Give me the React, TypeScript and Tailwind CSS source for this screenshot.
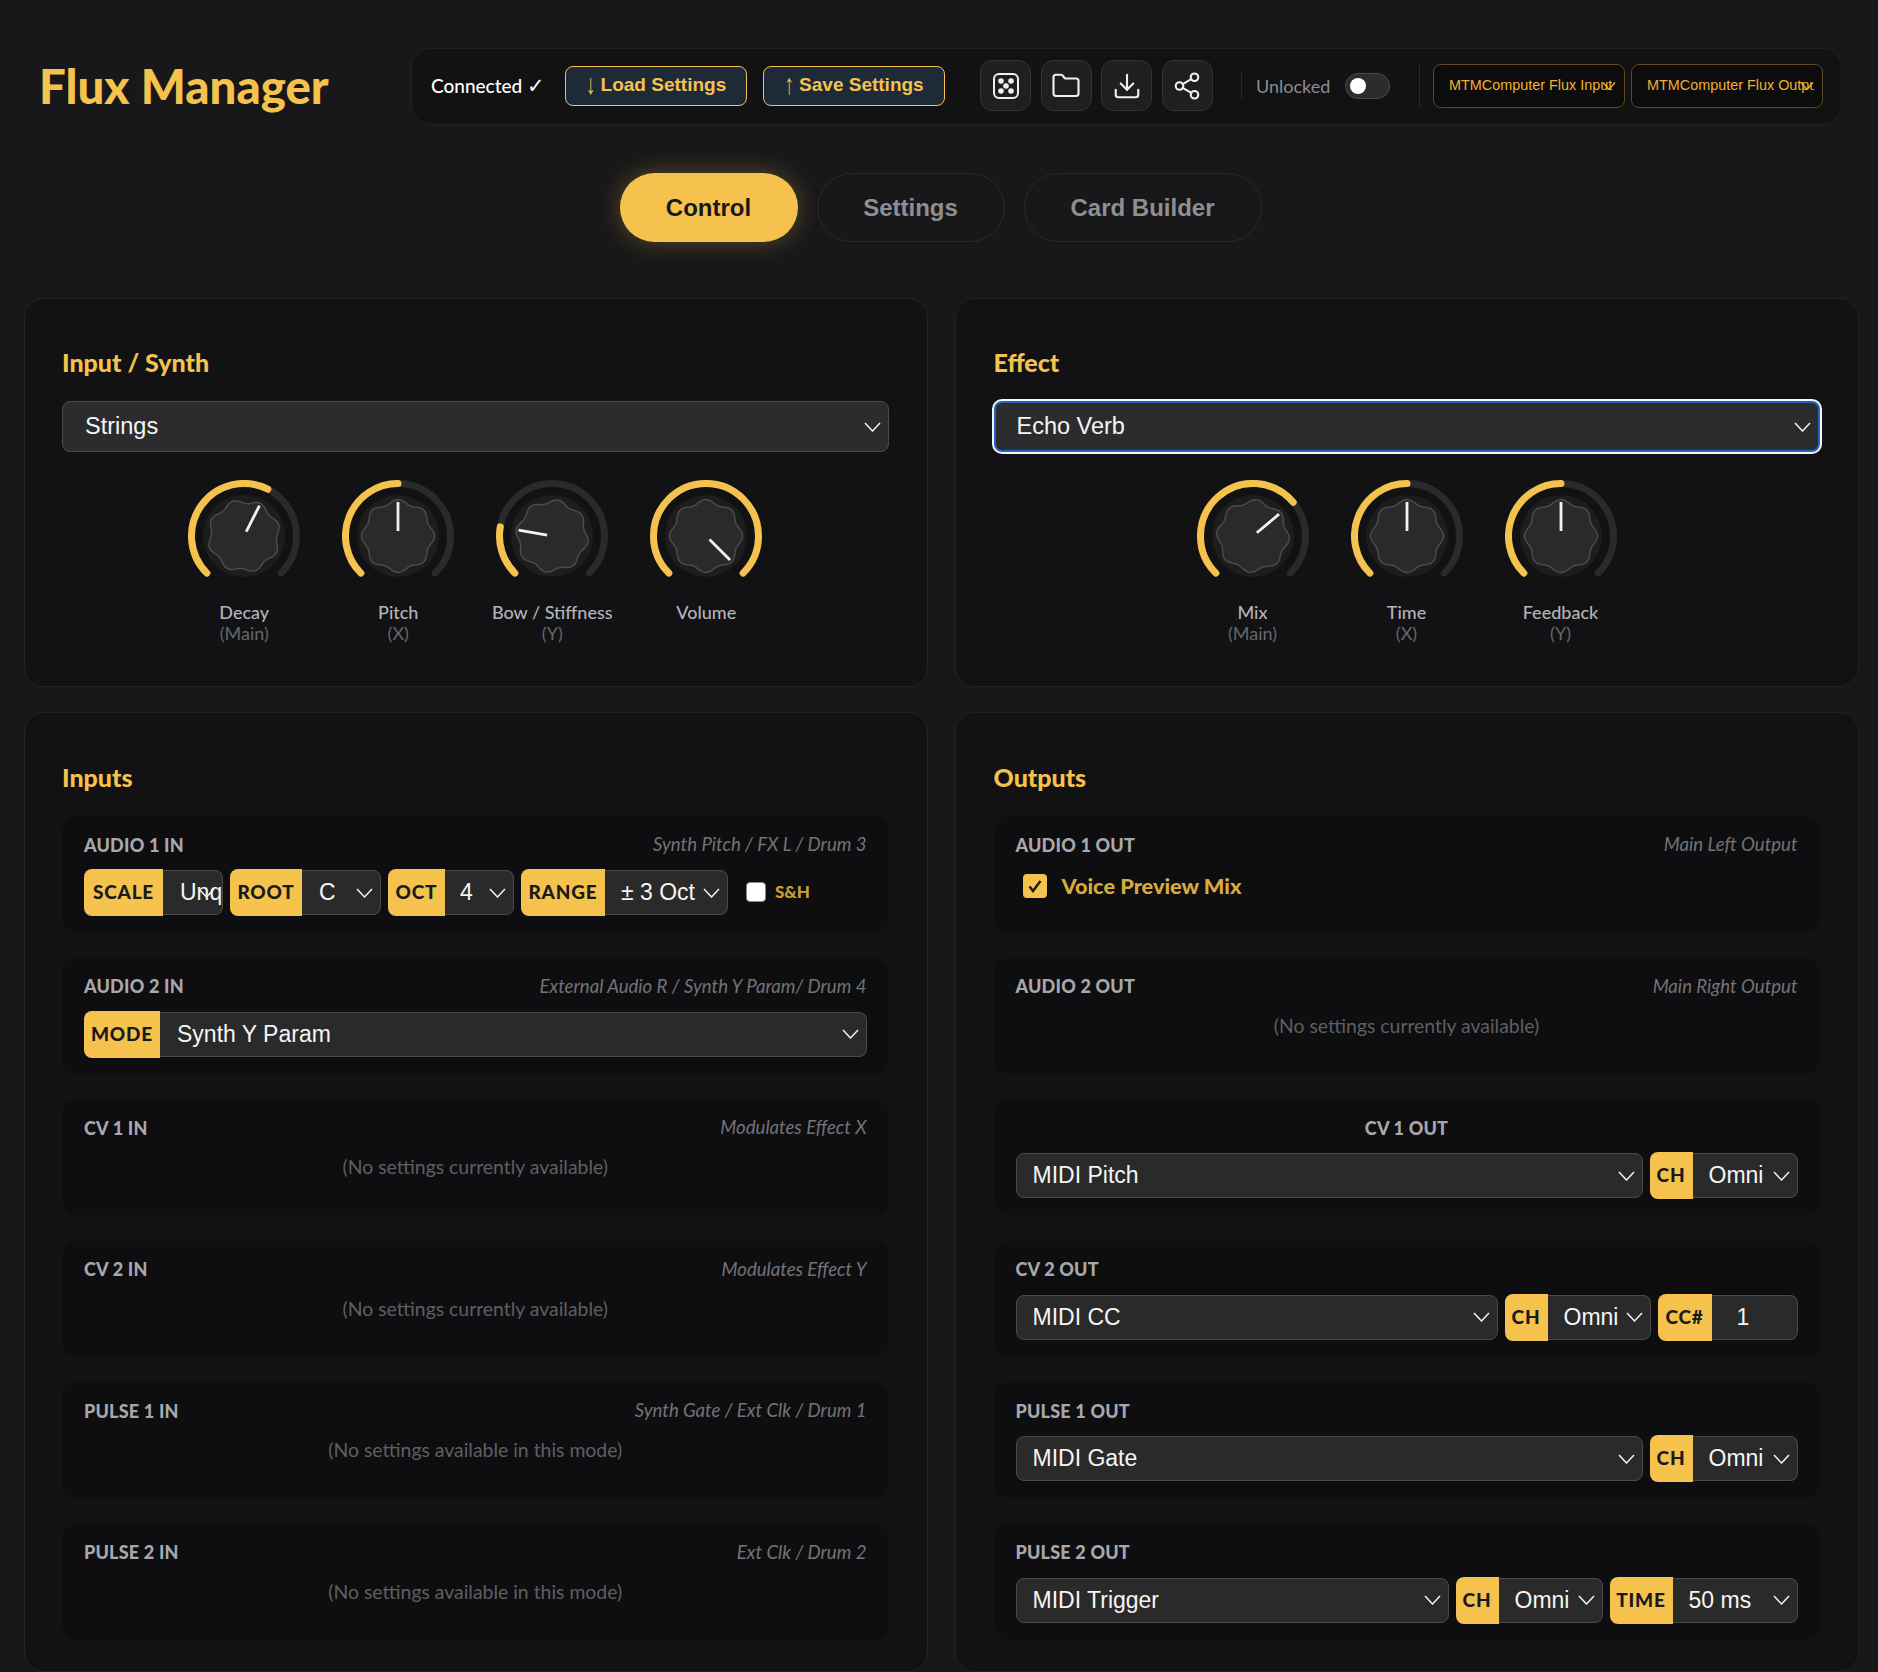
import { Download, Folder, Share2 } from 'lucide-react'

const sans = "[font-family:'Liberation_Sans',Arial,sans-serif]"

function polar(r: number, deg: number) {
  const a = ((deg - 90) * Math.PI) / 180
  return [56 + r * Math.cos(a), 56 + r * Math.sin(a)]
}

function arc(from: number, to: number) {
  const [x1, y1] = polar(52.5, from)
  const [x2, y2] = polar(52.5, to)
  return `M${x1} ${y1}A52.5 52.5 0 ${to - from > 180 ? 1 : 0} 1 ${x2} ${y2}`
}

// scalloped cap of the knob, eight lobes
const wavy = Array.from({ length: 121 }, (_, i) => {
  const deg = i * 3
  const [x, y] = polar(34.5 + 2 * Math.cos((8 * deg * Math.PI) / 180), deg)
  return `${i ? 'L' : 'M'}${x.toFixed(2)} ${y.toFixed(2)}`
}).join('') + 'Z'

function Knob({ angle, label, sub }: { angle: number; label: string; sub?: string }) {
  return (
    <div className="flex w-[130px] flex-col items-center">
      <svg width="112" height="112" viewBox="0 0 112 112">
        <path d={arc(-135, 135)} fill="none" stroke="#2a2a2c" strokeWidth="7" strokeLinecap="round" />
        <path d={arc(-135, angle)} fill="none" stroke="#f4c24d" strokeWidth="7" strokeLinecap="round" />
        <circle cx="56" cy="56" r="41" fill="#1d1d1e" />
        <g transform={`rotate(${angle} 56 56)`}>
          <path d={wavy} fill="#2a2a2c" stroke="#4b4b4d" strokeWidth="1.5" />
          <line x1="56" y1="51" x2="56" y2="22" stroke="#f2f2f2" strokeWidth="2.8" />
        </g>
      </svg>
      <div className="mt-[10px] h-[20px] text-[18px] leading-[20px] font-medium whitespace-nowrap text-[#b4b4b8]">{label}</div>
      {sub && <div className="text-[18px] leading-[22px] text-[#66666a]">{sub}</div>}
    </div>
  )
}

function Chevron({ className }: { className: string }) {
  return (
    <svg className={`absolute top-1/2 -translate-y-1/2 ${className}`} width="17" height="10" viewBox="0 0 17 10" fill="none">
      <path d="M1 1l7.5 8L16 1" stroke="#f2f2f2" strokeWidth="1.5" />
    </svg>
  )
}

function Select({ value, className = '', hideChevron }: { value: string; className?: string; hideChevron?: boolean }) {
  return (
    <div className={`relative flex h-[45px] items-center overflow-hidden border border-[#4a4a4c] bg-[#2a2a2b] text-[23px] whitespace-nowrap text-[#f5f5f5] ${sans} ${className}`}>
      {value}
      {!hideChevron && <Chevron className="right-[7px]" />}
    </div>
  )
}

function Tag({ children, className }: { children: string; className: string }) {
  return (
    <div className={`flex h-[47px] shrink-0 items-center justify-center rounded-l-lg bg-[#f4c24d] text-[19px] font-black tracking-[0.8px] text-[#1a1a1a] ${className}`}>
      {children}
    </div>
  )
}

function Row({ label, desc, center, children }: { label: string; desc?: string; center?: boolean; children?: React.ReactNode }) {
  return (
    <div className="h-[116px] rounded-2xl bg-[#0e0e10] px-[22px] pt-[18px]">
      <div className={`flex h-[22px] items-center ${center ? 'justify-center' : 'justify-between'}`}>
        <span className="text-[18px] font-black tracking-[0.2px] text-[#a8a8ac]">{label}</span>
        {desc && <span className="text-[18.6px] text-[#737377] italic">{desc}</span>}
      </div>
      {children}
    </div>
  )
}

function Controls({ children }: { children: React.ReactNode }) {
  return <div className="mt-[13px] flex h-[47px] items-center">{children}</div>
}

function Empty({ children }: { children: string }) {
  return <div className="mt-[17px] text-center text-[19.4px] leading-[22px] text-[#5f5f63]">{children}</div>
}

function IconButton({ children }: { children: React.ReactNode }) {
  return (
    <button className="flex size-[51px] items-center justify-center rounded-xl border border-[#333336] bg-[#1f1f21] text-[#f0f0f0]">
      {children}
    </button>
  )
}

function PortSelect({ value, className }: { value: string; className: string }) {
  return (
    <div className={`relative flex h-[44px] items-center rounded-lg border border-[#5c4a1e] bg-[#0c0c0d] pt-[1px] pr-[8px] pl-[15px] text-[14.4px] whitespace-nowrap text-[#f0b030] ${sans} ${className}`}>
      <span className="overflow-hidden">{value}</span>
      <svg className="absolute top-1/2 right-[8px] -translate-y-1/2" width="14" height="9" viewBox="0 0 14 9" fill="none">
        <path d="M1 1l6 7 6-7" stroke="#f0b030" strokeWidth="1.3" />
      </svg>
    </div>
  )
}

function SaveButton({ arrow, children }: { arrow: string; children: string }) {
  return (
    <button className={`h-[40px] w-[182px] rounded-lg border border-[#f4c24d] bg-[#1f2a38] text-[19px] font-bold whitespace-nowrap text-[#f4c24d] ${sans}`}>
      <span className="inline-block scale-y-150 font-normal">{arrow}</span> {children}
    </button>
  )
}

export default function App() {
  return (
    <div className="h-[1672px] overflow-hidden bg-[#18181a] pt-[48px] [font-family:Lato,sans-serif]">
      <header className="flex h-[77px] items-center pl-[39px]">
        <h1 className="mb-[1px] w-[372px] shrink-0 text-[47.4px] font-black whitespace-nowrap text-[#f4c24d]">Flux Manager</h1>
        <div className="flex h-[77px] w-[1431px] shrink-0 items-center rounded-[20px] border border-[#202023] bg-[#121214] pb-[2px] pl-[19px]">
          <span className="w-[134px] shrink-0 pt-[1px] text-[19px] font-medium text-white">
            Connected <span className="text-[21px] leading-none">✓</span>
          </span>
          <SaveButton arrow="↓">Load Settings</SaveButton>
          <div className="w-[16px] shrink-0" />
          <SaveButton arrow="↑">Save Settings</SaveButton>
          <div className="flex w-[268px] shrink-0 gap-[9.5px] pl-[35px]">
            <IconButton>
              <svg width="26" height="26" viewBox="0 0 26 26" fill="currentColor">
                <rect x="1" y="1" width="24" height="24" rx="5" fill="none" stroke="currentColor" strokeWidth="2" />
                <circle cx="8" cy="8" r="2.8" />
                <circle cx="18" cy="8" r="2.8" />
                <circle cx="13" cy="13" r="2.8" />
                <circle cx="8" cy="18" r="2.8" />
                <circle cx="18" cy="18" r="2.8" />
              </svg>
            </IconButton>
            <IconButton><Folder size={30} strokeWidth={1.7} /></IconButton>
            <IconButton><Download size={30} strokeWidth={1.7} /></IconButton>
            <IconButton><Share2 size={30} strokeWidth={1.7} /></IconButton>
          </div>
          <div className="ml-[28px] h-[26px] w-px bg-[#2a2a2d]" />
          <span className="ml-[14px] w-[89px] pt-[1px] text-[18px] text-[#8c8c90]">Unlocked</span>
          <div className="flex h-[26px] w-[45px] items-center rounded-full border border-[#4a4a4c] bg-[#2c2c2e] pl-[4px]">
            <div className="size-[16px] rounded-full bg-white" />
          </div>
          <div className="ml-[29px] h-[44px] w-px bg-[#2a2a2d]" />
          <PortSelect value="MTMComputer Flux Input" className="ml-[13px] w-[192px]" />
          <PortSelect value="MTMComputer Flux Output" className="ml-[6px] w-[192px]" />
        </div>
      </header>

      <nav className={`mt-[48px] flex justify-center gap-[19px] pl-[3px] text-[24px] font-bold ${sans}`}>
        <button className="h-[69px] w-[178px] rounded-full bg-[#f4c24d] text-[#18181a] shadow-[0_0_24px_rgba(244,194,77,0.3)]">Control</button>
        <button className="h-[69px] w-[188px] rounded-full border border-[#2a2a2d] text-[#8f8f93]">Settings</button>
        <button className="h-[69px] w-[238px] rounded-full border border-[#2a2a2d] text-[#8f8f93]">Card Builder</button>
      </nav>

      <main className="mt-[56px] grid grid-cols-[904px_904px] gap-x-[27px] gap-y-[25px] pl-[24px]">
        <section className="h-[389px] rounded-[20px] border border-[#222225] bg-[#121214] pt-[48px] pr-[38.5px] pl-[37px]">
          <h2 className="mb-[24px] h-[30px] text-[25px] leading-[30px] font-black text-[#f4c24d]">Input / Synth</h2>
          <Select value="Strings" className="h-[51px] rounded-lg pt-[1px] pl-[22px] !text-[23.5px] !bg-[#2c2c2e]" />
          <div className="mt-[28px] flex justify-center gap-[24px]">
            <Knob angle={27} label="Decay" sub="(Main)" />
            <Knob angle={0} label="Pitch" sub="(X)" />
            <Knob angle={-80} label="Bow / Stiffness" sub="(Y)" />
            <Knob angle={135} label="Volume" />
          </div>
        </section>

        <section className="h-[389px] rounded-[20px] border border-[#222225] bg-[#121214] pt-[48px] pr-[38.5px] pl-[37.5px]">
          <h2 className="mb-[24px] h-[30px] text-[25px] leading-[30px] font-black text-[#f4c24d]">Effect</h2>
          <Select value="Echo Verb" className="h-[51px] rounded-lg !border-[2px] !border-[#2563c8] pt-[1px] pl-[21px] !text-[23.5px] !bg-[#2c2c2e] shadow-[0_0_0_2px_#f5f5f5]" />
          <div className="mt-[28px] flex justify-center gap-[24px]">
            <Knob angle={50} label="Mix" sub="(Main)" />
            <Knob angle={0} label="Time" sub="(X)" />
            <Knob angle={0} label="Feedback" sub="(Y)" />
          </div>
        </section>

        <section className="h-[960px] rounded-[20px] border border-[#222225] bg-[#121214] pt-[49px] pr-[38.5px] pl-[37px]">
          <h2 className="mb-[24px] h-[30px] text-[25px] leading-[30px] font-black text-[#f4c24d]">Inputs</h2>
          <div className="flex flex-col gap-[25.5px]">
            <Row label="AUDIO 1 IN" desc="Synth Pitch / FX L / Drum 3">
              <Controls>
                <Tag className="w-[79px]">SCALE</Tag>
                <Select value="Unquantized" className="w-[60px] rounded-r-lg border-l-0 pl-[17px]" />
                <Tag className="ml-[7px] w-[72px]">ROOT</Tag>
                <Select value="C" className="w-[79px] rounded-r-lg border-l-0 pl-[17px]" />
                <Tag className="ml-[7px] w-[57px]">OCT</Tag>
                <Select value="4" className="w-[69px] rounded-r-lg border-l-0 pl-[15px]" />
                <Tag className="ml-[7px] w-[84px]">RANGE</Tag>
                <Select value="± 3 Oct" className="w-[123px] rounded-r-lg border-l-0 pl-[16px]" />
                <div className="mb-[2px] ml-[18px] size-[20px] rounded-[4px] border border-[#8a8a8a] bg-white" />
                <span className="mb-[2px] ml-[9px] text-[17px] font-black text-[#c8a030]">S&amp;H</span>
              </Controls>
            </Row>
            <Row label="AUDIO 2 IN" desc="External Audio R / Synth Y Param/ Drum 4">
              <Controls>
                <Tag className="w-[76px]">MODE</Tag>
                <Select value="Synth Y Param" className="flex-1 rounded-r-lg border-l-0 pl-[17px]" />
              </Controls>
            </Row>
            <Row label="CV 1 IN" desc="Modulates Effect X">
              <Empty>(No settings currently available)</Empty>
            </Row>
            <Row label="CV 2 IN" desc="Modulates Effect Y">
              <Empty>(No settings currently available)</Empty>
            </Row>
            <Row label="PULSE 1 IN" desc="Synth Gate / Ext Clk / Drum 1">
              <Empty>(No settings available in this mode)</Empty>
            </Row>
            <Row label="PULSE 2 IN" desc="Ext Clk / Drum 2">
              <Empty>(No settings available in this mode)</Empty>
            </Row>
          </div>
        </section>

        <section className="h-[960px] rounded-[20px] border border-[#222225] bg-[#121214] pt-[49px] pr-[38.5px] pl-[37.5px]">
          <h2 className="mb-[24px] h-[30px] text-[25px] leading-[30px] font-black text-[#f4c24d]">Outputs</h2>
          <div className="flex flex-col gap-[25.5px]">
            <Row label="AUDIO 1 OUT" desc="Main Left Output">
              <div className="mt-[18px] ml-[7px] flex h-[24px] items-center">
                <div className="flex size-[24px] items-center justify-center rounded-[4px] bg-[#f4c24d]">
                  <svg width="16" height="16" viewBox="0 0 16 16" fill="none">
                    <path d="M2.5 8.5l3.5 4.5 7.5-10" stroke="#1a1a1a" strokeWidth="2.4" />
                  </svg>
                </div>
                <span className="ml-[15px] text-[21.7px] font-black text-[#d8ab3d]">Voice Preview Mix</span>
              </div>
            </Row>
            <Row label="AUDIO 2 OUT" desc="Main Right Output">
              <Empty>(No settings currently available)</Empty>
            </Row>
            <Row label="CV 1 OUT" center>
              <Controls>
                <Select value="MIDI Pitch" className="flex-1 rounded-lg pl-[16px]" />
                <Tag className="ml-[7px] w-[43px]">CH</Tag>
                <Select value="Omni" className="w-[105px] rounded-r-lg border-l-0 pl-[16px]" />
              </Controls>
            </Row>
            <Row label="CV 2 OUT">
              <Controls>
                <Select value="MIDI CC" className="flex-1 rounded-lg pl-[16px]" />
                <Tag className="ml-[7px] w-[43px]">CH</Tag>
                <Select value="Omni" className="w-[103px] rounded-r-lg border-l-0 pl-[16px]" />
                <Tag className="ml-[7px] w-[54px]">CC#</Tag>
                <Select value="1" hideChevron className="w-[86px] rounded-r-lg border-l-0 pl-[25px]" />
              </Controls>
            </Row>
            <Row label="PULSE 1 OUT">
              <Controls>
                <Select value="MIDI Gate" className="flex-1 rounded-lg pl-[16px]" />
                <Tag className="ml-[7px] w-[43px]">CH</Tag>
                <Select value="Omni" className="w-[105px] rounded-r-lg border-l-0 pl-[16px]" />
              </Controls>
            </Row>
            <Row label="PULSE 2 OUT">
              <Controls>
                <Select value="MIDI Trigger" className="flex-1 rounded-lg pl-[16px]" />
                <Tag className="ml-[7px] w-[43px]">CH</Tag>
                <Select value="Omni" className="w-[104px] rounded-r-lg border-l-0 pl-[16px]" />
                <Tag className="ml-[7px] w-[63px]">TIME</Tag>
                <Select value="50 ms" className="w-[125px] rounded-r-lg border-l-0 pl-[16px]" />
              </Controls>
            </Row>
          </div>
        </section>
      </main>
    </div>
  )
}
